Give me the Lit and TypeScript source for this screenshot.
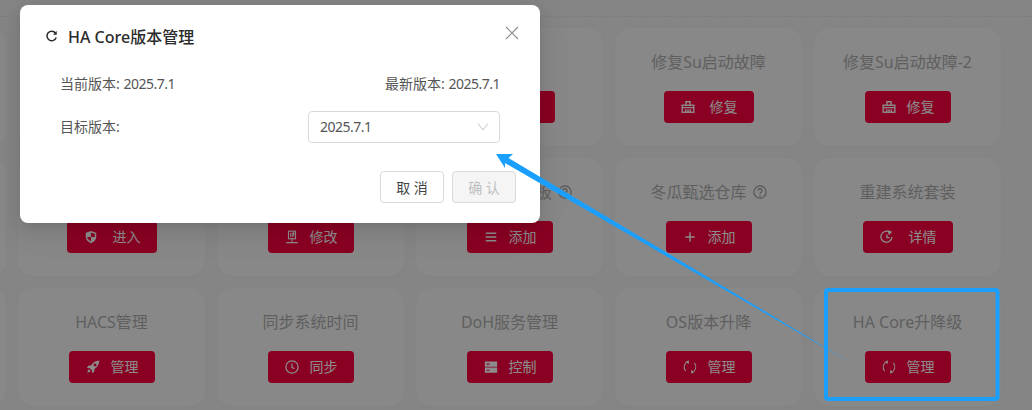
import { LitElement, html, css, svg } from "lit";
import { customElement } from "lit/decorators.js";

const icons: Record<string, any> = {
  shield: svg`<path d="M12 1.500 21 4.500V11.500C21 17 17 20.500 12 22.500 7 20.500 3 17 3 11.500V4.500Z" fill="currentColor"/><path d="M12 4.500V12H18.500V6.500ZM12 12V19.500C9 18 5.500 15.500 5.500 12Z" fill="#fb003e"/>`,
  ip: svg`<g fill="none" stroke="currentColor" stroke-width="2"><rect x="6" y="2" width="12" height="13"/><path d="M10 5v7M13.500 5h1.500v3.500h-1.500zM13.500 5v7M12 15v5M2 21.500h20"/></g>`,
  menu: svg`<path d="M3 5.500h18M3 12h18M3 18.500h18" fill="none" stroke="currentColor" stroke-width="2.400"/>`,
  plus: svg`<path d="M12 4v16M4 12h16" fill="none" stroke="currentColor" stroke-width="2.400"/>`,
  basket: svg`<g fill="none" stroke="currentColor" stroke-width="2.400"><path d="M8.500 9V3h7V9"/><rect x="2" y="9" width="20" height="12"/><path d="M2 13h20M8 16v5M12 16v5M16 16v5"/></g>`,
  history: svg`<g fill="none" stroke="currentColor" stroke-width="2.200"><path d="M20.500 12A9.500 9.500 0 1 1 15 3"/><path d="M12 7.500V13h4.500"/></g><path d="M13 0 21 3 15 9Z" fill="currentColor"/>`,
  rocket: svg`<path d="M23 1C16.500 1.500 12 4 9 9L4 10 1.500 13.500 6.500 14 10 17.500 10.500 22.500 14 20 15 15C20 12 22.500 7.500 23 1ZM15.500 6A2.500 2.500 0 1 1 15.490 6ZM5 16 2.500 18.500l1 1-2.500 3.500 3.500-2.500 1 1 2.500-2.500Z" fill="currentColor" fill-rule="evenodd"/>`,
  clock: svg`<circle cx="12" cy="12" r="10.500" fill="none" stroke="currentColor" stroke-width="2.200"/><path d="M12 6v6.500l4 2.500" fill="none" stroke="currentColor" stroke-width="2.200"/>`,
  server: svg`<path d="M1.500 2.500h21v9h-21ZM1.500 13h21v9h-21Z" fill="currentColor"/><path d="M4.500 6h5v2h-5ZM4.500 16.500h5v2h-5Z" fill="#fb003e"/>`,
  sync: svg`<g fill="none" stroke="currentColor" stroke-width="1.800"><path d="M4.500 19A10.500 10.500 0 0 1 8.500 2.500"/><path d="M19.500 5A10.500 10.500 0 0 1 15.500 21.500"/></g><path d="M10 .500V7L4.500 3.500ZM14 23.500V17L19.500 20.500Z" fill="currentColor"/>`,
};

interface Card { title?: string; help?: boolean; partial?: boolean; icon?: string; label?: string; wide?: boolean; }
const cards: Card[] = [
  {}, {}, {}, { icon: "basket", label: "修复", wide: true },
  { title: "修复Su启动故障", icon: "basket", label: "修复", wide: true },
  { title: "修复Su启动故障-2", icon: "basket", label: "修复" },
  {}, { icon: "shield", label: "进入", wide: true }, { icon: "ip", label: "修改" },
  { title: "板", help: true, partial: true, icon: "menu", label: "添加" },
  { title: "冬瓜甄选仓库", help: true, icon: "plus", label: "添加" },
  { title: "重建系统套装", icon: "history", label: "详情", wide: true },
  {}, { title: "HACS管理", icon: "rocket", label: "管理" },
  { title: "同步系统时间", icon: "clock", label: "同步" },
  { title: "DoH服务管理", icon: "server", label: "控制" },
  { title: "OS版本升降", icon: "sync", label: "管理" },
  { title: "HA Core升降级", icon: "sync", label: "管理" },
];

@customElement("app-root")
export class AppRoot extends LitElement {
  static styles = css`
    :host { display: block; position: relative; width: 1032px; height: 410px; overflow: hidden;
      background: #f3f3f3; font-family: "Noto Sans", "Noto Sans CJK SC", sans-serif; }
    .rule { height: 16px; border-bottom: 1px dashed #e4e4e4; margin-bottom: 10px; }
    .grid { display: grid; grid-template-columns: repeat(6, 189px); grid-auto-rows: 120px; gap: 10px; margin-left: -182.5px; }
    .card { box-sizing: border-box; background: #f8f8f8; border: 1px solid #f0f0f0; border-radius: 16px;
      box-shadow: 0 1px 3px rgba(0,0,0,.02); display: flex; flex-direction: column; align-items: center; padding: 23px 0 0 1px; }
    .title { height: 22px; line-height: 22px; font-size: 16px; color: #aeaeae; display: flex; align-items: center; gap: 6px; white-space: nowrap; margin-bottom: 18px; }
    .title.partial { padding-left: 89px; }
    .help { width: 14px; height: 14px; color: #a0a0a0; }
    .btn { box-sizing: border-box; height: 32px; display: flex; align-items: center; gap: 11px; padding: 0 16px 0 17px;
      background: #fb003e; color: #fff; border-radius: 4px; font-size: 14px; line-height: 22px; }
    .btn.wide { gap: 15px; }
    .btn svg { width: 14px; height: 14px; flex: none; }
    .overlay { position: absolute; inset: 0; background: rgba(0,0,0,.45); }
    .modal { position: absolute; left: 20px; top: 5px; width: 520px; height: 218px; box-sizing: border-box; background: #fff; border-radius: 8px;
      padding: 19px 24px 20px 26px; box-shadow: 0 6px 16px rgba(0,0,0,.08), 0 3px 6px -4px rgba(0,0,0,.12), 0 9px 28px 8px rgba(0,0,0,.05); color: #555; font-size: 14px; }
    .head { display: flex; align-items: center; gap: 10px; height: 24px; font-size: 16px; font-weight: 500; color: #2b2b2b; }
    .head svg { width: 12px; height: 12px; }
    .close { position: absolute; right: 21px; top: 21px; width: 14px; height: 14px; color: #8c8c8c; }
    .body { margin: 25px 16px 0 14px; display: flex; flex-direction: column; gap: 16px; }
    .row { display: flex; justify-content: space-between; align-items: center; line-height: 22px; }
    .v { letter-spacing: -.5px; }
    .select { box-sizing: border-box; width: 192px; height: 32px; border: 1px solid #d9d9d9; border-radius: 4px; padding: 0 10px 0 11px; display: flex; align-items: center; justify-content: space-between; }
    .select svg { width: 12px; height: 12px; color: #c4c4c4; }
    .foot { display: flex; justify-content: flex-end; gap: 8px; margin-top: 28px; }
    .fbtn { box-sizing: border-box; width: 64px; height: 32px; border: 1px solid #d9d9d9; border-radius: 4px; display: flex; align-items: center; justify-content: center; color: #444; }
    .fbtn.off { background: #f5f5f5; color: #bfbfbf; }
    .notes { position: absolute; left: 0; top: 0; width: 1032px; height: 410px; pointer-events: none; }
  `;

  render() {
    return html`
      <div class="rule"></div>
      <div class="grid">
        ${cards.map((c) => html`<div class="card">
          ${c.label ? html`<div class="title ${c.partial ? "partial" : ""}">${c.title ?? ""}
            ${c.help ? html`<svg class="help" viewBox="0 0 24 24" fill="none" stroke="currentColor" stroke-width="2.200"><circle cx="12" cy="12" r="10.500"/><path d="M8.500 9.500a3.500 3.500 0 1 1 5.500 3c-1.300.9-2 1.500-2 3"/><path d="M12 17v2.500"/></svg>` : ""}</div>
          <div class="btn ${c.wide ? "wide" : ""}"><svg viewBox="0 0 24 24">${icons[c.icon!]}</svg><span>${c.label}</span></div>` : ""}
        </div>`)}
      </div>
      <div class="overlay"></div>
      <div class="modal">
        <div class="head"><svg viewBox="0 0 24 24" fill="none" stroke="currentColor" stroke-width="3"><path d="M20.500 15A9.500 9.500 0 1 1 19 6"/><path d="M21.500 2V9.500H14Z" fill="currentColor" stroke="none"/></svg><span>HA Core版本管理</span></div>
        <svg class="close" viewBox="0 0 14 14" fill="none" stroke="currentColor" stroke-width="1.100"><path d="M1 1 13 13M13 1 1 13"/></svg>
        <div class="body">
          <div class="row"><span>当前版本: <span class="v">2025.7.1</span></span><span>最新版本: <span class="v">2025.7.1</span></span></div>
          <div class="row"><span>目标版本:</span>
            <div class="select"><span class="v">2025.7.1</span><svg viewBox="0 0 12 12" fill="none" stroke="currentColor"><path d="M1 2.500 6 9 11 2.500"/></svg></div>
          </div>
        </div>
        <div class="foot"><div class="fbtn">取 消</div><div class="fbtn off">确 认</div></div>
      </div>
      <svg class="notes" viewBox="0 0 1032 410">
        <rect x="826" y="290" width="171.500" height="109" rx="2" fill="none" stroke="#1a9fff" stroke-width="4"/>
        <polygon points="496,154 513,154 508.500,158 853,364 505,163 505,168" fill="#1a9fff"/>
      </svg>
    `;
  }
}
